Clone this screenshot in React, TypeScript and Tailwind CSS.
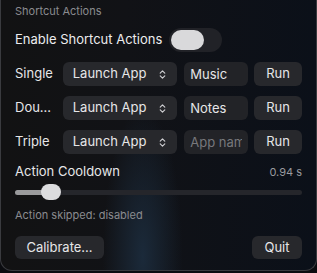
import React, { useState } from 'react';
import { ChevronsUpDown } from 'lucide-react';

// One shortcut row: label, action picker, app name field, run button
const ShortcutRow = ({ label, app, placeholder }: { label: string; app: string; placeholder?: string }) => {
  return (
    <div className="flex items-center h-[24px]">
      <span className="w-[48px] text-[13px] text-[#e6e6e8] truncate pr-1">{label}</span>
      <div className="w-[115px] h-[24px] flex items-center justify-between pl-[10px] pr-[9px] rounded-[6px] bg-[#27282c] text-[13px] text-[#e6e6e8]">
        <span>Launch App</span>
        <ChevronsUpDown size={11} strokeWidth={2.5} className="text-[#cfcfd2]" />
      </div>
      <input
        readOnly
        value={app}
        placeholder={placeholder}
        className="ml-[7px] w-[64px] h-[24px] px-[6px] rounded-[6px] bg-[#222327] text-[13px] text-[#e6e6e8] placeholder:text-[#77787c] outline-none"
      />
      <div className="ml-[6px] w-[48px] h-[24px] flex items-center justify-center rounded-[6px] bg-[#27282c] text-[13px] text-[#e6e6e8]">
        Run
      </div>
    </div>
  );
};

export default function App() {
  const [enabled] = useState(false);

  return (
    <div
      className="w-[317px] h-[273px] overflow-hidden bg-[#0b0c10]"
      style={{ fontFamily: 'Inter, "Noto Sans", sans-serif' }}
    >
      <div className="w-[317px] h-[271px] rounded-b-[12px] border border-t-0 border-[#3a3b3f] bg-[radial-gradient(ellipse_40px_150px_at_45%_95%,#1b2a3a_0%,transparent_100%),linear-gradient(90deg,#121213_0%,#111216_40%,#0b1019_100%)] px-[14px] pt-[1px]">
        {/* Section header */}
        <div className="h-[20px] flex items-center text-[11px] text-[#8a8b8f]">Shortcut Actions</div>

        {/* Enable toggle */}
        <div className="mt-[7px] h-[24px] flex items-center">
          <span className="w-[154px] text-[13px] text-[#ececee] whitespace-nowrap">Enable Shortcut Actions</span>
          <div className="w-[53px] h-[24px] rounded-full bg-[#212227] flex items-center px-[2px]">
            <div className={`w-[33px] h-[20px] rounded-full bg-[#d9d9db] ${enabled ? 'ml-auto' : ''}`}></div>
          </div>
        </div>

        {/* Tap rows */}
        <div className="mt-[10px] flex flex-col gap-[10px]">
          <ShortcutRow label="Single" app="Music" />
          <ShortcutRow label="Dou..." app="Notes" />
          <ShortcutRow label="Triple" app="" placeholder="App name" />
        </div>

        {/* Cooldown */}
        <div className="mt-[10px] h-[16px] flex items-center justify-between">
          <span className="text-[13px] text-[#e6e6e8]">Action Cooldown</span>
          <span className="text-[11px] text-[#9a9b9f]">0.94 s</span>
        </div>
        <div className="mt-[4px] h-[16px] flex items-center">
          <div className="flex-1 h-[5px] rounded-full bg-[#25262b] flex items-center">
            <div className="w-[28px] h-[5px] rounded-l-full bg-[#9a9a9c]"></div>
            <div className="w-[20px] h-[16px] -ml-[2px] rounded-full bg-[#dcdcde]"></div>
          </div>
        </div>

        <div className="mt-[8px] h-[14px] flex items-center text-[11px] text-[#8a8b8f]">Action skipped: disabled</div>

        {/* Footer buttons */}
        <div className="mt-[14px] flex items-center justify-between">
          <div className="h-[23px] w-[89px] flex items-center justify-center rounded-[6px] bg-[#27282c] text-[13px] text-[#e6e6e8]">
            Calibrate...
          </div>
          <div className="h-[23px] w-[50px] flex items-center justify-center rounded-[6px] bg-[#27282c] text-[13px] text-[#e6e6e8]">
            Quit
          </div>
        </div>
      </div>
    </div>
  );
}
